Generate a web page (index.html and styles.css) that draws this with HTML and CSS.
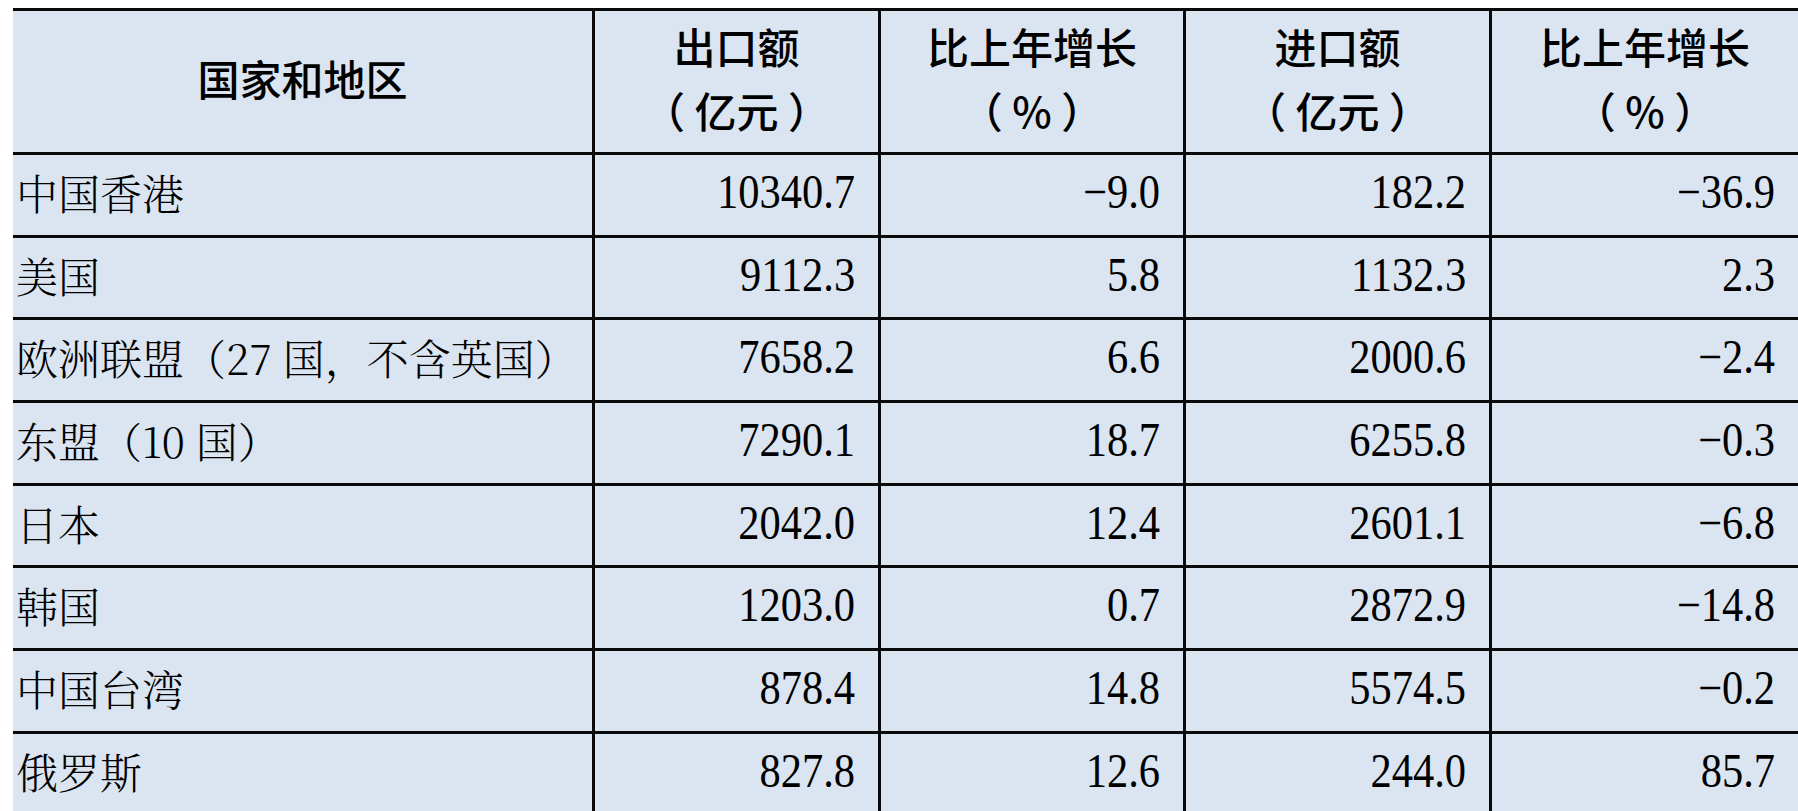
FILE: index.html
```html
<!DOCTYPE html>
<html lang="zh-CN">
<head>
<meta charset="utf-8">
<title>国家和地区进出口</title>
<link rel="stylesheet" href="styles.css">
</head>
<body>
<table class="trade">
  <colgroup>
    <col class="c-name">
    <col class="c-num">
    <col class="c-pct">
    <col class="c-num2">
    <col class="c-pct2">
  </colgroup>
  <thead>
    <tr>
      <th>国家和地区</th>
      <th>出口额<br>（ 亿元 ）</th>
      <th>比上年增长<br>（ % ）</th>
      <th>进口额<br>（ 亿元 ）</th>
      <th>比上年增长<br>（ % ）</th>
    </tr>
  </thead>
  <tbody>
    <tr><td class="name">中国香港</td><td class="num"><span>10340.7</span></td><td class="num"><span>−9.0</span></td><td class="num"><span>182.2</span></td><td class="num"><span>−36.9</span></td></tr>
    <tr><td class="name">美国</td><td class="num"><span>9112.3</span></td><td class="num"><span>5.8</span></td><td class="num"><span>1132.3</span></td><td class="num"><span>2.3</span></td></tr>
    <tr><td class="name">欧洲联盟（27 国，不含英国）</td><td class="num"><span>7658.2</span></td><td class="num"><span>6.6</span></td><td class="num"><span>2000.6</span></td><td class="num"><span>−2.4</span></td></tr>
    <tr><td class="name">东盟（10 国）</td><td class="num"><span>7290.1</span></td><td class="num"><span>18.7</span></td><td class="num"><span>6255.8</span></td><td class="num"><span>−0.3</span></td></tr>
    <tr><td class="name">日本</td><td class="num"><span>2042.0</span></td><td class="num"><span>12.4</span></td><td class="num"><span>2601.1</span></td><td class="num"><span>−6.8</span></td></tr>
    <tr><td class="name">韩国</td><td class="num"><span>1203.0</span></td><td class="num"><span>0.7</span></td><td class="num"><span>2872.9</span></td><td class="num"><span>−14.8</span></td></tr>
    <tr><td class="name">中国台湾</td><td class="num"><span>878.4</span></td><td class="num"><span>14.8</span></td><td class="num"><span>5574.5</span></td><td class="num"><span>−0.2</span></td></tr>
    <tr><td class="name">俄罗斯</td><td class="num"><span>827.8</span></td><td class="num"><span>12.6</span></td><td class="num"><span>244.0</span></td><td class="num"><span>85.7</span></td></tr>
  </tbody>
</table>
</body>
</html>
```
FILE: styles.css
```css
html, body {
  margin: 0;
  padding: 0;
  background: #ffffff;
  overflow: hidden;
}
body {
  padding: 8px 0 0 13px;
}
.trade {
  border-collapse: separate;
  border-spacing: 0;
  table-layout: fixed;
  width: 1785px;
  border-top: 3px solid #0a0a0a;
  background: #dbe5f1;
  color: #000;
}
.c-name { width: 582px; }
.c-num { width: 286px; }
.c-pct { width: 305px; }
.c-num2 { width: 306px; }
.c-pct2 { width: 306px; }
.trade th,
.trade td {
  border-right: 3px solid #0a0a0a;
  border-bottom: 3px solid #0a0a0a;
  padding: 0;
  white-space: nowrap;
  overflow: hidden;
}
.trade th:last-child,
.trade td:last-child {
  border-right: none;
}
.trade th {
  height: 133px;
  padding-bottom: 8px;
  font-family: "Noto Sans CJK SC", "Noto Sans", sans-serif;
  font-weight: 500;
  font-size: 42px;
  line-height: 64px;
  text-align: center;
  vertical-align: middle;
}
.trade td {
  height: 73.7px;
  padding-bottom: 6px;
  vertical-align: middle;
}
.trade td.name {
  font-family: "Noto Serif CJK SC", "Source Han Serif SC", "AR PL UMing CN", "Noto Sans CJK SC", serif;
  font-weight: 300;
  font-size: 42px;
  line-height: 60px;
  padding-left: 3px;
  text-align: left;
}
.trade td.num {
  font-family: "Liberation Serif", "Times New Roman", serif;
  font-size: 48px;
  line-height: 60px;
  text-align: right;
  padding-right: 23px;
}
.trade td.num span {
  display: inline-block;
  transform: scaleX(0.885);
  transform-origin: right center;
}
```
